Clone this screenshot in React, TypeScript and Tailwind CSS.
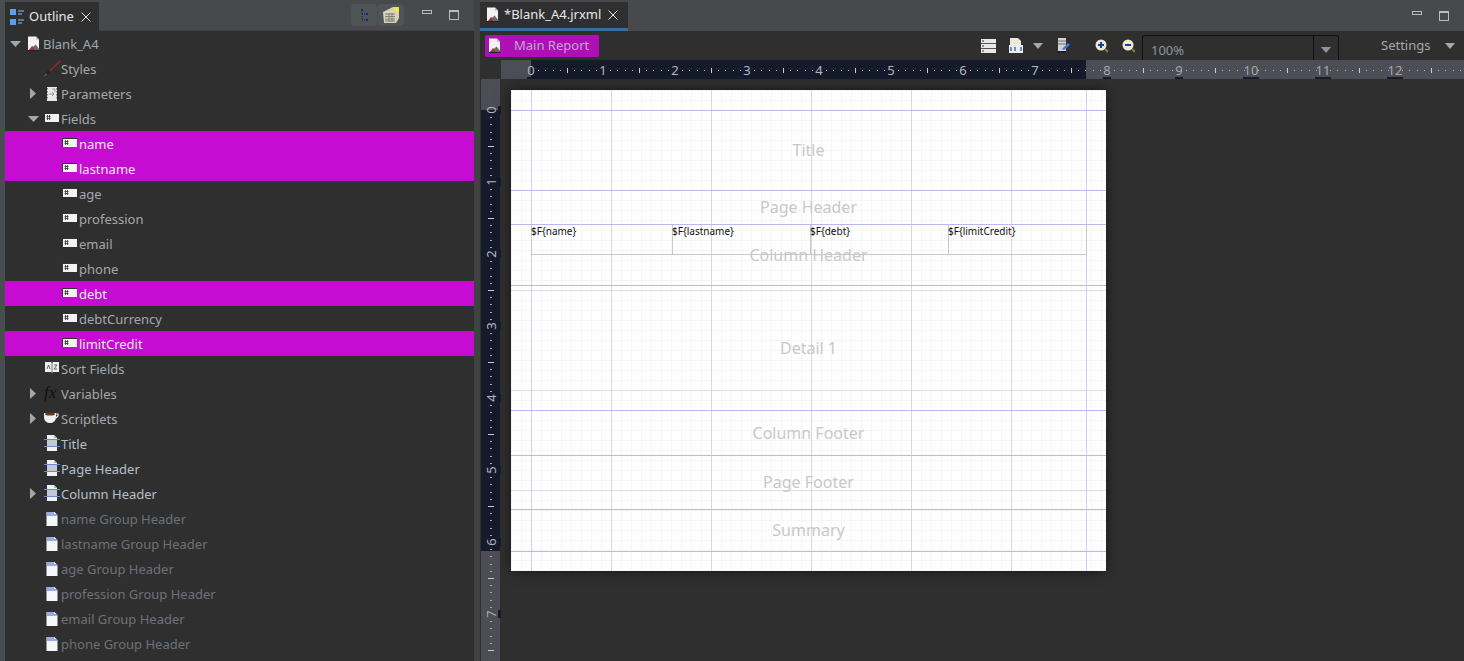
import React from 'react';

const DocIcon = () => (
  <svg width="14" height="16" viewBox="0 0 14 16" className="shrink-0">
    <path d="M1 0.5h8l3 3v11H1z" fill="#f2f2f2" />
    <path d="M9 0.5v3h3z" fill="#b8b8b8" />
    <path d="M1 14.5h12" stroke="#222" strokeWidth="1" />
    <path d="M2 14l3-4 2 1.5 1 2.5z" fill="#b22a2a" />
    <path d="M6 11l2.5-2.5L13 14H7z" fill="#6a6a6a" />
  </svg>
);

const BrushIcon = () => (
  <svg width="18" height="18" viewBox="0 0 18 18" className="shrink-0">
    <path d="M17.5 0.5L6 12" stroke="#a81f24" strokeWidth="1.5" />
    <path d="M7 11l-2-0.5L2 14l-1 2 3-1 3-3z" fill="#222" />
    <path d="M1 16l3-2" stroke="#5a7ab0" strokeWidth="1" />
  </svg>
);

const ParamIcon = () => (
  <svg width="14" height="16" viewBox="0 0 14 16" className="shrink-0">
    <path d="M2 1h10v14H2z" fill="#e8e8e8" />
    <path d="M2 2v12M12 2v12" stroke="#222" strokeWidth="1" strokeDasharray="1.5 1.5" />
    <path d="M4 8h5M7 6l2 2-2 2" stroke="#8a9a9a" fill="none" />
    <path d="M7 3h3v3" stroke="#999" fill="none" />
  </svg>
);

const FieldIcon = () => (
  <svg width="15" height="9" viewBox="0 0 15 9" className="mb-[3px] shrink-0">
    <rect x="0" y="0" width="15" height="9" fill="#f2f2f2" />
    <path d="M0 0.5h15M0.5 0v9" stroke="#333" strokeWidth="1" />
    <path d="M3.5 2v5M5.5 2v5M2.5 3.5h4M2.5 5.5h4" stroke="#333" strokeWidth="0.8" />
  </svg>
);

const SortIcon = () => (
  <svg width="14" height="13" viewBox="0 0 14 13" className="mb-[2px] shrink-0">
    <path d="M0 1h6l1 1 1-1h6v10H8l-1 1-1-1H0z" fill="#efefef" />
    <path d="M7 0v13" stroke="#555" strokeWidth="0.8" />
    <path d="M2 8l1.5-4L5 8M9 4h3l-3 4h3" stroke="#444" strokeWidth="0.8" fill="none" />
  </svg>
);

const FxIcon = () => (
  <span className="mb-[3px] w-[15px] shrink-0 font-['Liberation_Serif',serif] text-[17px] italic leading-none text-[#111]">fx</span>
);

const CupIcon = () => (
  <svg width="15" height="12" viewBox="0 0 15 12" className="mb-[2px] shrink-0">
    <path d="M0 1h12v4c0 4-3 6-6 6s-6-2-6-6z" fill="#f0f0f0" />
    <ellipse cx="6" cy="2" rx="5" ry="1.5" fill="#6b3a1e" />
    <path d="M12 2h2v2l-2 2" stroke="#eee" strokeWidth="1.2" fill="none" />
  </svg>
);

const BandIcon = () => (
  <svg width="16" height="16" viewBox="0 0 16 16" className="mb-[1px] shrink-0">
    <path d="M3 0h7l3 3v13H3z" fill="#f1f1f1" />
    <path d="M10 0v3h3z" fill="#9bb" />
    <rect x="3" y="4" width="10" height="7" fill="#c3c9d3" />
    <path d="M0 4.5h16M0 11.5h16" stroke="#6a8ad0" strokeWidth="1" />
  </svg>
);

const GroupIcon = () => (
  <svg width="12" height="16" viewBox="0 0 12 16" className="shrink-0">
    <path d="M0.5 1h8l3 3v11h-11z" fill="#f4f6fa" />
    <path d="M1 2h7M1 4h10" stroke="#3f5fd0" strokeWidth="1.2" />
  </svg>
);

const OutlineIcon = () => (
  <svg width="14" height="16" viewBox="0 0 14 16" className="shrink-0">
    <rect x="0" y="0" width="6" height="6" fill="#5aa0e8" />
    <rect x="0" y="10" width="6" height="6" fill="#5aa0e8" />
    <path d="M8 2h6M8 5h4M8 11h6M8 14h4" stroke="#8cc0ee" strokeWidth="1" />
  </svg>
);

const CloseIcon = () => (
  <svg width="10" height="10" viewBox="0 0 10 10" className="shrink-0">
    <path d="M0.5 0.5l9 9M9.5 0.5l-9 9" stroke="#dfe3e6" strokeWidth="1" />
  </svg>
);

const MinMax = ({ className }: { className: string }) => (
  <div className={`flex items-start self-start pt-[11px] ${className}`}>
    <div className="h-[4px] w-[10px] border border-[#b8bcc0]" />
    <div className="ml-[17px] h-[10px] w-[10px] border border-t-2 border-[#b8bcc0]" />
  </div>
);

const Arrow = ({ open }: { open?: boolean }) =>
  open ? (
    <svg width="11" height="6" viewBox="0 0 11 6" className="shrink-0"><path d="M0 0h11L5.5 6z" fill="#a3a8ac" /></svg>
  ) : (
    <svg width="6" height="11" viewBox="0 0 6 11" className="shrink-0"><path d="M0 0v11l6-5.5z" fill="#a3a8ac" /></svg>
  );

type Row = {
  label: string;
  level: 0 | 1 | 2;
  icon: React.ReactNode;
  arrow?: 'open' | 'closed';
  tone?: 'band' | 'off';
  selected?: boolean;
};

const rows: Row[] = [
  { label: 'Blank_A4', level: 0, icon: <DocIcon />, arrow: 'open' },
  { label: 'Styles', level: 1, icon: <BrushIcon /> },
  { label: 'Parameters', level: 1, icon: <ParamIcon />, arrow: 'closed' },
  { label: 'Fields', level: 1, icon: <FieldIcon />, arrow: 'open' },
  { label: 'name', level: 2, icon: <FieldIcon />, selected: true },
  { label: 'lastname', level: 2, icon: <FieldIcon />, selected: true },
  { label: 'age', level: 2, icon: <FieldIcon /> },
  { label: 'profession', level: 2, icon: <FieldIcon /> },
  { label: 'email', level: 2, icon: <FieldIcon /> },
  { label: 'phone', level: 2, icon: <FieldIcon /> },
  { label: 'debt', level: 2, icon: <FieldIcon />, selected: true },
  { label: 'debtCurrency', level: 2, icon: <FieldIcon /> },
  { label: 'limitCredit', level: 2, icon: <FieldIcon />, selected: true },
  { label: 'Sort Fields', level: 1, icon: <SortIcon /> },
  { label: 'Variables', level: 1, icon: <FxIcon />, arrow: 'closed' },
  { label: 'Scriptlets', level: 1, icon: <CupIcon />, arrow: 'closed' },
  { label: 'Title', level: 1, icon: <BandIcon />, tone: 'band' },
  { label: 'Page Header', level: 1, icon: <BandIcon />, tone: 'band' },
  { label: 'Column Header', level: 1, icon: <BandIcon />, arrow: 'closed', tone: 'band' },
  { label: 'name Group Header', level: 1, icon: <GroupIcon />, tone: 'off' },
  { label: 'lastname Group Header', level: 1, icon: <GroupIcon />, tone: 'off' },
  { label: 'age Group Header', level: 1, icon: <GroupIcon />, tone: 'off' },
  { label: 'profession Group Header', level: 1, icon: <GroupIcon />, tone: 'off' },
  { label: 'email Group Header', level: 1, icon: <GroupIcon />, tone: 'off' },
  { label: 'phone Group Header', level: 1, icon: <GroupIcon />, tone: 'off' },
];

const TreeRow = ({ row }: { row: Row }) => {
  const textColor = row.selected
    ? 'text-[#f0e6f2]'
    : row.tone === 'band'
      ? 'text-[#b4c0cc]'
      : row.tone === 'off'
        ? 'text-[#6c7279]'
        : 'text-[#a3a8ad]';
  const indent = row.level === 0 ? 'pl-[3px]' : row.level === 1 ? 'pl-[21px]' : 'pl-[39px]';
  return (
    <div className={`flex h-[25px] items-center ${indent} ${row.selected ? 'bg-[#c60cd2]' : ''}`}>
      <div className="flex w-[17px] shrink-0 items-center justify-center pr-[3px]">
        {row.arrow === 'open' && <Arrow open />}
        {row.arrow === 'closed' && <Arrow />}
      </div>
      <div className="flex w-[17px] shrink-0 items-center justify-center">{row.icon}</div>
      <span className={`ml-[1px] pt-[1px] text-[13px] leading-none ${textColor}`}>{row.label}</span>
    </div>
  );
};

const Outline = () => (
  <div className="flex w-[469px] shrink-0 flex-col bg-[#2f2f2f]">
    <div className="flex h-[31px] items-end border-b border-[#3d3f41] bg-[#47494c]">
      <div className="mb-[-1px] flex h-[29px] w-[94px] items-center bg-[#2f2f2f] pl-[5px]">
        <OutlineIcon />
        <span className="ml-[5px] text-[13px] text-[#e2e7ec]">Outline</span>
        <span className="ml-[7px]"><CloseIcon /></span>
      </div>
      <div className="ml-auto flex h-[31px] items-center gap-[1px]">
        <div className="flex h-[22px] w-[26px] items-center justify-center rounded-[4px] bg-[#4f5457]">
          <svg width="9" height="12" viewBox="0 0 9 12">
            <path d="M2 1v10h5M2 5h5" stroke="#222" strokeDasharray="1 1" fill="none" />
            <rect x="1" y="0" width="2" height="2" fill="#1420a0" />
            <rect x="6" y="4" width="2" height="2" fill="#1420a0" />
            <rect x="6" y="10" width="2" height="2" fill="#1420a0" />
          </svg>
        </div>
        <div className="flex h-[22px] w-[26px] items-center justify-center rounded-[4px] bg-[#4f5457]">
          <svg width="17" height="16" viewBox="0 0 17 16">
            <path d="M0 5l10-5h6v11l-3 5H1z" fill="#d8d2b8" />
            <path d="M2 7h10M2 9.5h10M2 12h10M2 14h10M6 6v9M9 6v9" stroke="#6a6a6a" strokeWidth="0.8" />
            <rect x="11" y="1" width="5" height="4" fill="#f2e83a" />
          </svg>
        </div>
        <MinMax className="ml-[17px] mr-[15px]" />
      </div>
    </div>
    <div>
      {rows.map(r => (
        <TreeRow key={r.label} row={r} />
      ))}
    </div>
  </div>
);

const HorizontalRuler = () => {
  // ruler runs from x=501, page margin starts at 531, one inch is 72px
  const ticks = [];
  for (let i = 0; i < 134; i++) {
    const x = 30 + i * 7.2;
    if (i % 10 === 0) continue;
    ticks.push(
      i % 5 === 0
        ? <rect key={i} x={Math.round(x)} y={8} width={1} height={5} fill="#c8ccd0" />
        : <rect key={i} x={Math.round(x)} y={10} width={1} height={1} fill="#b4b8bc" />
    );
  }
  return (
    <svg width="963" height="19" className="block">
      <rect width="963" height="19" fill="#4c4d55" />
      <rect x="30" width="555" height="19" fill="#161b2b" />
      {ticks}
      {Array.from({ length: 13 }, (_, i) => (
        <g key={i}>
          <rect x={30 + i * 72 - (i > 9 ? 8 : 4)} y={17} width={i > 9 ? 16 : 8} height={2} fill="#161b2b" />
          <text x={30 + i * 72} y={15} textAnchor="middle" fontSize="13" fill={i < 8 ? '#b0b8c2' : '#a4a8ae'} fontFamily="'Noto Sans', sans-serif">{i}</text>
        </g>
      ))}
    </svg>
  );
};

const VerticalRuler = () => {
  const ticks = [];
  for (let i = 0; i < 76; i++) {
    const y = 31 + i * 7.2;
    if (i % 10 === 0) continue;
    ticks.push(
      i % 5 === 0
        ? <rect key={i} x={7} y={Math.round(y)} width={6} height={1} fill="#c8ccd0" />
        : <rect key={i} x={9} y={Math.round(y)} width={2} height={1} fill="#a4a8ac" />
    );
  }
  return (
    <svg width="20" height="582" className="block shrink-0">
      <rect width="19" height="582" fill="#4c4d55" />
      <rect y="31" width="19" height="441" fill="#161b2b" />
      {ticks}
      {Array.from({ length: 8 }, (_, i) => (
        <g key={i}>
          <rect x={17} y={31 + i * 72 - 4} width={3} height={8} fill="#161b2b" />
          <text transform={`translate(15 ${31 + i * 72}) rotate(-90)`} textAnchor="middle" fontSize="13" fill={i < 7 ? '#b0b8c2' : '#a4a8ae'} fontFamily="'Noto Sans', sans-serif">{i}</text>
        </g>
      ))}
    </svg>
  );
};

const PageGrid = () => (
  <svg width="595" height="481" className="absolute inset-0">
    <defs>
      <pattern id="minor" width="10" height="10" patternUnits="userSpaceOnUse">
        <path d="M0.5 0v10M0 0.5h10" stroke="#f5f5f7" strokeWidth="1" fill="none" />
      </pattern>
    </defs>
    <rect width="595" height="481" fill="url(#minor)" />
    {[100, 200, 300, 400, 500].map(x => (
      <rect key={x} x={x} width="1" height="481" fill="#d9d9d9" />
    ))}
    {[100, 200, 300, 400].map(y => (
      <rect key={y} y={y} width="595" height="1" fill="#dddddd" />
    ))}
    <rect x="20" width="1" height="481" fill="#cfcfff" />
    <rect x="575" width="1" height="481" fill="#cfcfff" />
  </svg>
);

const bands = [
  { label: 'Title', h: 'h-[80px] pb-[2px]' },
  { label: 'Page Header', h: 'h-[34px] pb-[2px]' },
  { label: 'Column Header', h: 'h-[61px]', cells: true },
  { label: 'Detail 1', h: 'h-[125px]' },
  { label: 'Column Footer', h: 'h-[45px]' },
  { label: 'Page Footer', h: 'h-[54px] pb-[2px]' },
  { label: 'Summary', h: 'h-[42px] pb-[2px]' },
];

const cells = [
  { text: '$F{name}', w: 'w-[141px]' },
  { text: '$F{lastname}', w: 'w-[138px]' },
  { text: '$F{debt}', w: 'w-[138px]' },
  { text: '$F{limitCredit}', w: 'w-[139px]' },
];

const Page = () => (
  <div className="relative h-[481px] w-[595px] bg-white shadow-[0_0_12px_rgba(0,0,0,0.55)]">
    <PageGrid />
    <div className="relative pt-[20px]">
      {bands.map(b => (
        <div key={b.label} className={`relative flex items-center justify-center border-t border-[#b9b9f0] text-[16px] text-[#c8c8c8] ${b.h}`}>
          {b.label}
          {b.cells && (
            <div className="absolute left-[20px] top-0 flex h-[30px]">
              {cells.map((c, i) => (
                <div key={c.text} className={`${c.w} border-b border-l border-[#c8c8c8] ${i === 3 ? 'border-r' : ''} text-[10px] leading-[13px] text-[#111]`}>
                  <span className="ml-[-1px]">{c.text}</span>
                </div>
              ))}
            </div>
          )}
        </div>
      ))}
      <div className="border-t border-[#b9b9f0]" />
    </div>
  </div>
);

const Editor = () => (
  <div className="flex min-w-0 flex-1 flex-col bg-[#2f2f2f]">
    <div className="flex h-[31px] items-end bg-[#47494c]">
      <div className="flex h-[29px] w-[148px] flex-col bg-[#2f2f2f]">
        <div className="flex flex-1 items-center pl-[6px]">
          <DocIcon />
          <span className="ml-[4px] text-[13px] text-[#e2e7ec]">*Blank_A4.jrxml</span>
          <span className="ml-[7px]"><CloseIcon /></span>
        </div>
        <div className="h-[3px] bg-[#3a6c9c]" />
      </div>
      <MinMax className="ml-auto mr-[15px]" />
    </div>
    <div className="flex h-[29px] items-center">
      <div className="ml-[5px] flex h-[22px] w-[114px] items-center rounded-[2px] bg-[#b00eb6] pl-[3px]">
        <DocIcon />
        <span className="ml-[12px] text-[13px] text-[#c7a7cf]">Main Report</span>
      </div>
      <div className="ml-[382px] flex items-center">
        <svg width="15" height="14" viewBox="0 0 15 14">
          <rect width="15" height="14" fill="#e8e8e8" />
          <path d="M0 4.5h15M0 9.5h15" stroke="#555" strokeWidth="1" />
          <path d="M1 2h2M1 7h2M1 12h2" stroke="#333" strokeWidth="1" />
        </svg>
        <svg width="14" height="15" viewBox="0 0 14 15" className="ml-[13px]">
          <path d="M1 0h8l3 3v5H1z" fill="#eee8d8" />
          <rect x="0" y="7" width="14" height="8" fill="#e8eef4" />
          <path d="M2 9v4M6 9v4M12 9v4" stroke="#2a4a90" strokeWidth="1.2" />
        </svg>
        <svg width="10" height="6" viewBox="0 0 10 6" className="ml-[10px]"><path d="M0 0h10L5 6z" fill="#a3a8ac" /></svg>
        <svg width="13" height="15" viewBox="0 0 13 15" className="ml-[14px]">
          <rect x="1" y="0" width="8" height="13" fill="#d0d0d0" />
          <path d="M1 3h8M1 6h8" stroke="#777" />
          <rect x="0" y="13" width="9" height="2" fill="#222" />
          <path d="M5 11l6-6 2 2-6 5z" fill="#3878d8" />
        </svg>
        <svg width="13" height="14" viewBox="0 0 13 14" className="ml-[25px]">
          <circle cx="6" cy="6" r="5.5" fill="#efe9cf" />
          <path d="M3 6h6M6 3v6" stroke="#1c3ca8" strokeWidth="2" />
          <path d="M10 10l3 3" stroke="#8a7a58" strokeWidth="2" />
        </svg>
        <svg width="13" height="14" viewBox="0 0 13 14" className="ml-[14px]">
          <circle cx="6" cy="6" r="5.5" fill="#efe9cf" />
          <path d="M3 6h6" stroke="#1c3ca8" strokeWidth="2" />
          <path d="M10 10l3 3" stroke="#8a7a58" strokeWidth="2" />
        </svg>
      </div>
      <div className="ml-[7px] flex h-[25px] w-[197px] self-end rounded-t-[3px] border border-b-0 border-[#101010]">
        <span className="flex-1 pl-[8px] pt-[5px] text-[13px] leading-[18px] text-[#8f959b]">100%</span>
        <div className="flex w-[25px] items-center justify-center border-l border-[#101010] pt-[4px]">
          <svg width="10" height="6" viewBox="0 0 10 6"><path d="M0 0h10L5 6z" fill="#8f959b" /></svg>
        </div>
      </div>
      <span className="ml-[42px] text-[13px] text-[#a3a8ad]">Settings</span>
      <svg width="10" height="6" viewBox="0 0 10 6" className="ml-[15px]"><path d="M0 0h10L5 6z" fill="#a3a8ac" /></svg>
    </div>
    <div className="pl-[21px]">
      <HorizontalRuler />
    </div>
    <div className="flex min-h-0 flex-1 pl-[1px]">
      <VerticalRuler />
      <div className="ml-[10px] mt-[11px]">
        <Page />
      </div>
    </div>
  </div>
);

export default function App() {
  return (
    <div className="flex h-[661px] w-[1464px] overflow-hidden bg-[#4a4e51] pl-[5px] font-['Noto_Sans',sans-serif]">
      <Outline />
      <div className="w-[6px] shrink-0 bg-[#3f4143]" />
      <Editor />
    </div>
  );
}
